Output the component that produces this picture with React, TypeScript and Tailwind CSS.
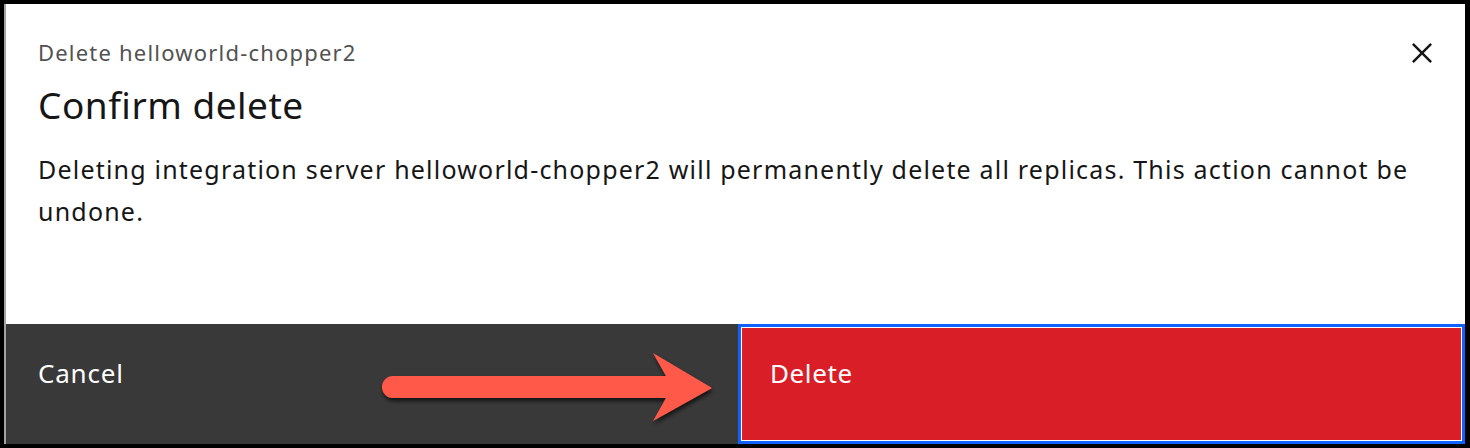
import React from "react";

export default function App() {
  return (
    <div className="relative w-[1470px] h-[448px] bg-black pt-[4px] pl-[4px] pr-[5px] pb-[4px]" style={{ fontFamily: '"Noto Sans", "Liberation Sans", sans-serif' }}>
      <div className="relative h-full flex flex-col bg-white border-l-2 border-[#a3a3a3]">
        <div className="relative flex-1 pl-[32px] pr-[40px] pt-[34px]">
          <div className="text-[22px] leading-[28px] tracking-[1.2px] text-[#525252]">Delete helloworld-chopper2</div>
          <div className="mt-[16px] text-[37px] leading-[46px] tracking-[0.5px] text-[#161616]">Confirm delete</div>
          <p className="mt-[20px] max-w-[1410px] text-[25px] leading-[42px] tracking-[1.2px] text-[#161616]">
            Deleting integration server helloworld-chopper2 will permanently delete all replicas. This action cannot be undone.
          </p>
          <button className="absolute right-[23px] top-[29px] w-[40px] h-[40px] flex items-center justify-center">
            <svg width="40" height="40" viewBox="0 0 32 32" fill="#161616">
              <path d="M24 9.4L22.6 8 16 14.6 9.4 8 8 9.4 14.6 16 8 22.6 9.4 24 16 17.4 22.6 24 24 22.6 17.4 16 24 9.4z" />
            </svg>
          </button>
        </div>
        <div className="flex h-[120px]">
          <div className="w-[732px] bg-[#393939] text-white text-[26px] leading-[32px] tracking-[0.8px] pl-[32px] pt-[33px]">Cancel</div>
          <div className="flex-1 bg-[#da1e28] text-white text-[26px] leading-[32px] tracking-[0.6px] border-[3px] border-[#0f62fe] shadow-[inset_0_0_0_1px_#ffffff] pl-[29px] pt-[30px]">Delete</div>
        </div>
      </div>
      <svg className="absolute left-0 top-0 pointer-events-none" width="1470" height="448" viewBox="0 0 1470 448">
        <defs>
          <filter id="sh" x="-10%" y="-30%" width="120%" height="160%">
            <feDropShadow dx="1" dy="3" stdDeviation="2" floodColor="#000" floodOpacity="0.7" />
          </filter>
        </defs>
        <path
          d="M393 376 L666 376 L653 353 L712 388 L653 421 L666 398 L393 398 A11 11 0 0 1 393 376 Z"
          fill="#ff5a4a"
          filter="url(#sh)"
        />
      </svg>
    </div>
  );
}
